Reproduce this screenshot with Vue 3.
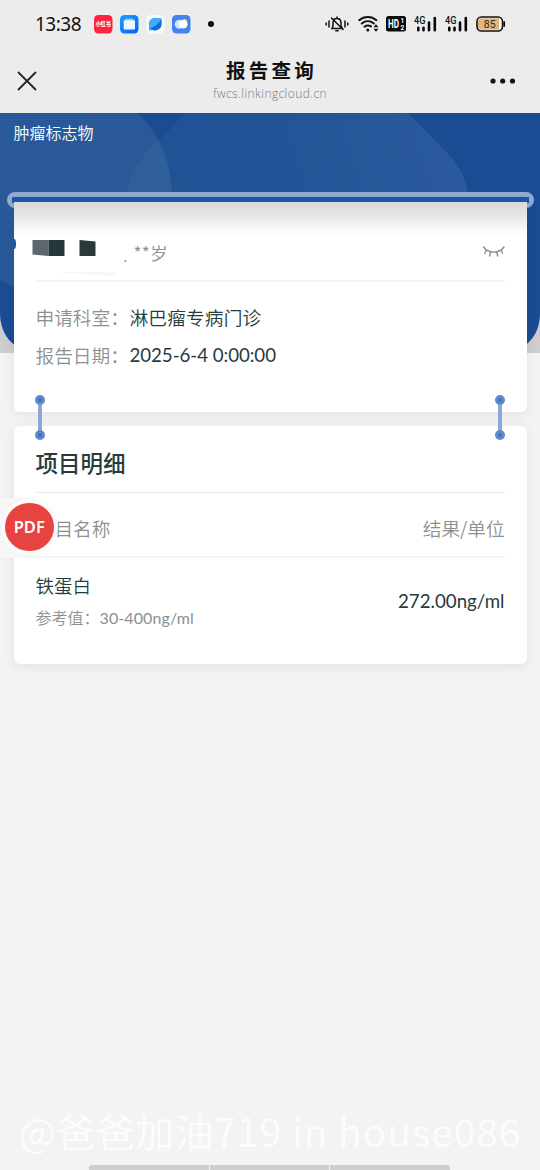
<script setup>
const signals = [1, 2]
const info = [
  { label: '申请科室：', value: '淋巴瘤专病门诊' },
  { label: '报告日期：', value: '2025-6-4 0:00:00', latin: true },
]
</script>

<template>
  <div class="page">
    <header class="top">
      <div class="status">
        <span class="time">13:38</span>
        <svg class="apps" width="124" height="20" viewBox="0 0 124 20">
          <rect x="1" y="1" width="18.5" height="18.5" rx="4.5" fill="#fd2442" />
          <text x="10.2" y="12.4" text-anchor="middle" class="red-label" textLength="15" lengthAdjust="spacingAndGlyphs">小红书</text>
          <defs>
            <linearGradient id="wallet" x1="0" y1="0" x2="1" y2="1"><stop offset="0" stop-color="#14a4fb" /><stop offset="1" stop-color="#0860fb" /></linearGradient>
          </defs>
          <rect x="27" y="1" width="18.5" height="18.5" rx="4.5" fill="url(#wallet)" />
          <path d="M32.5 4.500h7.500l1 2.500h-9.500z" fill="#7fc8ff" />
          <rect x="30.700" y="6.300" width="11.300" height="9.200" rx="1" fill="#eef7ff" />
          <rect x="53" y="1" width="18.500" height="18.500" rx="4.500" fill="#f7f8fa" />
          <circle cx="62" cy="10" r="6.200" fill="#3dadf8" />
          <path d="M62 4h6.500v5c0 4-3 7.200-6.500 7.200h-6v-4z" fill="#3dadf8" />
          <path d="M68.500 5.500v4.500a6.300 6.300 0 0 1-11.200 4c4.700-1.500 8.200-4.300 11.200-8.500z" fill="#1468de" />
          <rect x="79" y="1" width="18.500" height="18.500" rx="4.500" fill="#4383ee" />
          <circle cx="91.500" cy="7.500" r="2.600" fill="#f8df3c" />
          <circle cx="86.300" cy="10.200" r="4.500" fill="#d5e5ff" />
          <circle cx="90.300" cy="10.300" r="4.300" fill="#fff" />
          <circle cx="118" cy="10" r="3" fill="#080808" />
        </svg>
        <div class="state">
          <svg width="24" height="18" viewBox="0 0 24 18" fill="none" stroke="#111" stroke-width="1.500" stroke-linecap="round">
            <path d="M1.200 8v2M4 6v6M20 6v6M22.800 8v2" />
            <path d="M7 13.500h10.500L16 11V8c0-2.800-1.500-4.500-4-4.500S8 5.200 8 8v3zM12 2v1.500M10.800 15.800h2.400M6.500 3l11.500 11.500" />
          </svg>
          <svg class="wifi" width="21" height="18" viewBox="0 0 21 18" fill="none" stroke="#111" stroke-width="2" stroke-linecap="round">
            <path d="M1.200 5.200c5-4.200 12.200-4.200 17.200 0M3.800 8.500c3.600-3 8.500-3 12 0M6.500 11.700c2-1.500 4.600-1.500 6.500-.3" />
            <circle cx="9.800" cy="15" r="1.500" fill="#111" stroke="none" />
            <path d="M15.500 12.300l2.500-3 2.500 3zM15.500 13.800l2.500 3 2.500-3z" fill="#111" stroke="none" />
          </svg>
          <svg class="hd" width="20" height="16" viewBox="0 0 20 16">
            <rect width="20" height="15.500" rx="2.500" fill="#080808" />
            <text x="2" y="12" class="hd-label" textLength="11" lengthAdjust="spacingAndGlyphs">HD</text>
            <text x="14.500" y="7.300" class="hd-num">1</text>
            <text x="14.500" y="13.700" class="hd-num">2</text>
          </svg>
          <svg v-for="s in signals" :key="s" class="signal" width="24" height="18" viewBox="0 0 24 18">
            <text x="0" y="8.700" class="net" textLength="11.500" lengthAdjust="spacingAndGlyphs">4G</text>
            <path d="M4.300 12.800v2.500M9.500 12.800v2.500M15 7.500v7.800M20.800 3v12.300" stroke="#080808" stroke-width="2.600" stroke-linecap="round" />
          </svg>
          <svg class="battery" width="30" height="17" viewBox="0 0 30 17">
            <rect x="1" y="1" width="25.500" height="14" rx="4.500" fill="#fff" stroke="#111" stroke-width="1.600" />
            <path d="M5 2.200h18v11.600H5a3 3 0 0 1-3-3V5.200a3 3 0 0 1 3-3z" fill="#ddb77e" />
            <path d="M28.200 6v4" stroke="#111" stroke-width="1.800" stroke-linecap="round" />
            <text x="13.700" y="12" text-anchor="middle" class="charge">85</text>
          </svg>
        </div>
      </div>
      <nav class="nav">
        <svg class="close" width="20" height="20" viewBox="0 0 20 20"><path d="M1.500 1.500l17 17M18.500 1.500l-17 17" stroke="#252528" stroke-width="1.800" stroke-linecap="round" /></svg>
        <div class="heading">
          <h1>报告查询</h1>
          <p>fwcs.linkingcloud.cn</p>
        </div>
        <svg class="more" width="26" height="6" viewBox="0 0 26 6" fill="#151515"><circle cx="3" cy="3" r="2.600" /><circle cx="12.700" cy="3" r="2.600" /><circle cx="22.500" cy="3" r="2.600" /></svg>
      </nav>
    </header>

    <section class="hero">
      <svg class="backdrop" width="540" height="240" viewBox="0 0 540 240">
        <defs>
          <linearGradient id="sweep" x1="130" y1="100" x2="440" y2="0" gradientUnits="userSpaceOnUse"><stop offset="0" stop-color="#1e5394" /><stop offset=".45" stop-color="#215496" /><stop offset="1" stop-color="#2a5a9d" /></linearGradient>
          <clipPath id="base"><path d="M0 0h540v200c0 24-16 40-40 40H40c-24 0-40-16-40-40z" /></clipPath>
        </defs>
        <rect width="540" height="240" fill="#ceced1" />
        <g clip-path="url(#base)">
          <rect width="540" height="240" fill="#1a4c93" />
          <path d="M186 0H408L450 43Q467 60 469 90H125Q127 61 145 42z" fill="url(#sweep)" />
          <path d="M0 0H138Q171 32 172 83A105 105 0 0 1 67 188Q30 188 0 166z" fill="#7092b5" fill-opacity=".2" />
        </g>
      </svg>
      <p class="category">肿瘤标志物</p>
      <div class="slot"></div>
    </section>

    <main>
      <section class="card summary">
        <div class="person">
          <svg class="mosaic" width="114" height="42" viewBox="0 0 114 42">
            <ellipse cx="0" cy="7" rx="2" ry="5" fill="#1b55a2" />
            <path d="M18.500 3h16v16l-16-1.500z" fill="#5d666a" />
            <path d="M34.500 3h16v16h-16z" fill="#243839" />
            <path d="M65.500 3l16 1.500V19h-16z" fill="#2b3939" />
            <path d="M42 35h62l-6 4z" fill="#f6f6f6" />
            <circle cx="111.300" cy="24" r="1" fill="#8c9090" />
          </svg>
          <span class="age">**岁</span>
          <svg class="eye" width="24" height="14" viewBox="0 0 24 14" fill="none" stroke="#8b8f8f" stroke-width="1.400" stroke-linecap="round"><path d="M1.500 2c5 6.800 15.500 6.800 20.500 0M4.300 5L2.800 8.200M8.500 7l-.8 4M14.800 7l.8 4M19 5l1.600 3.200" /></svg>
        </div>
        <div v-for="row in info" :key="row.label" class="row">
          <span class="label">{{ row.label }}</span><span class="value" :class="{ latin: row.latin }">{{ row.value }}</span>
        </div>
        <i class="link left"></i>
        <i class="link right"></i>
      </section>

      <section class="card detail">
        <h2>项目明细</h2>
        <div class="columns"><span class="first">目名称</span><span>结果/单位</span></div>
        <div class="result">
          <div>
            <p class="name">铁蛋白</p>
            <p class="range">参考值：<span>30-400ng/ml</span></p>
          </div>
          <span class="amount">272.00ng/ml</span>
        </div>
        <div class="pdf"><b>PDF</b></div>
      </section>
    </main>

    <footer>
      <p class="watermark">@爸爸加油<span>719 in house086</span></p>
      <div class="home"><i></i><i></i><i></i></div>
    </footer>
  </div>
</template>

<style>
body { margin: 0; background: #f3f3f5; }
</style>

<style scoped>
* { box-sizing: border-box; }
h1, h2, p { margin: 0; font-weight: 400; }
.page { width: 540px; height: 1170px; display: flex; flex-direction: column; overflow: hidden; background: #f3f3f5; font-family: Lato, "Noto Sans CJK SC", sans-serif; color: #263b3d; }
.top { height: 113px; flex: none; background: #ececec; color: #111; }
.status { height: 48px; display: flex; align-items: center; padding-left: 35px; }
.time { width: 58px; font: 400 19px/24px "Noto Sans", sans-serif; letter-spacing: -.5px; }
.apps { flex: none; }
.red-label { font: 900 6px "Noto Sans CJK SC", sans-serif; fill: #fff; }
.state { display: flex; align-items: center; margin-left: 108px; }
.state svg { flex: none; }
.wifi { margin-left: 9px; }
.hd { margin-left: 7px; }
.hd-label { font: 700 12px Roboto, sans-serif; fill: #fff; }
.hd-num { font: 700 6.500px Roboto, sans-serif; fill: #fff; }
.signal { margin-left: 8px; }
.signal + .signal { margin-left: 7px; }
.net { font: 500 10px Roboto, sans-serif; fill: #111; }
.battery { margin-left: 7px; }
.charge { font: 400 10.500px Roboto, sans-serif; fill: #332a1b; }
.nav { height: 65px; display: flex; justify-content: space-between; align-items: center; padding: 0 24px 0 17px; }
.heading { text-align: center; padding-left: 13px; }
.heading h1 { font: 700 19.500px/28px "Noto Sans CJK SC", sans-serif; letter-spacing: 3.300px; padding-left: 3px; margin-top: -3px; }
.heading p { font: 300 12px/18px "Open Sans", sans-serif; letter-spacing: .4px; color: #77797c; margin-top: 1px; }
.hero { height: 240px; flex: none; position: relative; overflow: hidden; }
.backdrop { position: absolute; inset: 0; }
.category { position: relative; padding: 7px 0 0 13.500px; font-size: 16px; line-height: 24px; color: #fff; font-family: "Noto Sans CJK SC", sans-serif; font-weight: 350; }
.slot { position: absolute; left: 7px; right: 6px; top: 78.500px; height: 16px; padding: 5px; border-radius: 8px; background: #92aad0; }
.slot::before { content: ""; display: block; height: 6px; background: #1d57ad; }
main { position: relative; margin-top: -151px; padding: 0 13.500px; }
.card { position: relative; background: #fff; border-radius: 6px; box-shadow: 0 2px 12px rgba(60, 60, 80, .09); padding: 0 22px; }
.summary { height: 210px; border-radius: 0 0 6px 6px; background: linear-gradient(#d8d8d9, #e4e4e4 12px, #fff 33px); }
.person { height: 80px; display: flex; align-items: flex-start; border-bottom: 2px solid #f4f4f5; color: #8c9090; }
.mosaic { margin: 35px 0 0 -22px; flex: none; }
.age { margin: 38px 0 0 6px; font: 350 17.500px/26px "Noto Sans CJK SC", sans-serif; letter-spacing: .3px; }
.eye { margin: 43px -1px 0 auto; }
.row { display: flex; height: 38px; align-items: center; font: 350 18.700px/28px "Noto Sans CJK SC", sans-serif; }
.person + .row { margin-top: 15.500px; }
.label { width: 94px; color: #8c9090; white-space: nowrap; }
.value { white-space: nowrap; letter-spacing: .15px; }
.latin { font-family: Lato, sans-serif; font-weight: 400; letter-spacing: -.05px; }
.link { position: absolute; top: 197.500px; width: 4px; height: 35px; background: #8aa7d8; z-index: 3; }
.link::before, .link::after { content: ""; position: absolute; left: -3px; width: 10px; height: 10px; border-radius: 50%; background: radial-gradient(#4373bd 0 1.500px, #5f8aca 2.500px); }
.link::before { top: -5px; }
.link::after { bottom: -5px; }
.left { left: 24.500px; }
.right { right: 24.500px; }
.detail { height: 238px; margin-top: 14px; }
h2 { height: 67px; padding-top: 20px; border-bottom: 1px solid #e8e9ea; font: 500 22.500px/32px "Noto Sans CJK SC", sans-serif; }
.columns { display: flex; justify-content: space-between; align-items: center; height: 65px; padding-top: 6px; border-bottom: 2px solid #f5f5f6; color: #8c9090; font: 350 18.600px/28px "Noto Sans CJK SC", sans-serif; }
.first { padding-left: 19px; }
.result { display: flex; justify-content: space-between; align-items: center; height: 85px; }
.name { font: 350 18.500px/28px "Noto Sans CJK SC", sans-serif; }
.range { margin-top: 6px; font: 350 16px/24px "Noto Sans CJK SC", sans-serif; color: #8c9090; }
.range span { font-family: Lato, sans-serif; font-weight: 400; letter-spacing: .1px; }
.amount { font-size: 18.700px; }
.pdf { position: absolute; left: -13.500px; top: 71.500px; width: 57px; height: 60px; padding: 5px 0 0 5px; background: linear-gradient(90deg, #f7f7f7 36px, transparent 36px); }
.pdf b { display: grid; place-items: center; width: 48.500px; height: 48.500px; border-radius: 50%; background: #e74340; color: #fff; font: 600 16.500px/20px "Noto Sans", sans-serif; box-shadow: 0 0 0 4px #fbfbfb, 0 0 12px rgba(0, 0, 0, .05); }
footer { margin-top: auto; height: 70px; flex: none; display: flex; flex-direction: column; justify-content: space-between; }
.watermark { padding-left: 19px; font: 350 39px/62px "Noto Sans CJK SC", sans-serif; letter-spacing: .6px; white-space: nowrap; color: #fcfcfd; margin-top: -1px; }
.watermark span { letter-spacing: 1.150px; }
.home { display: flex; gap: 1px; width: 361px; height: 5px; margin-left: 89px; border-radius: 3px 3px 0 0; overflow: hidden; }
.home i { flex: 1; background: #cdced0; }
</style>
